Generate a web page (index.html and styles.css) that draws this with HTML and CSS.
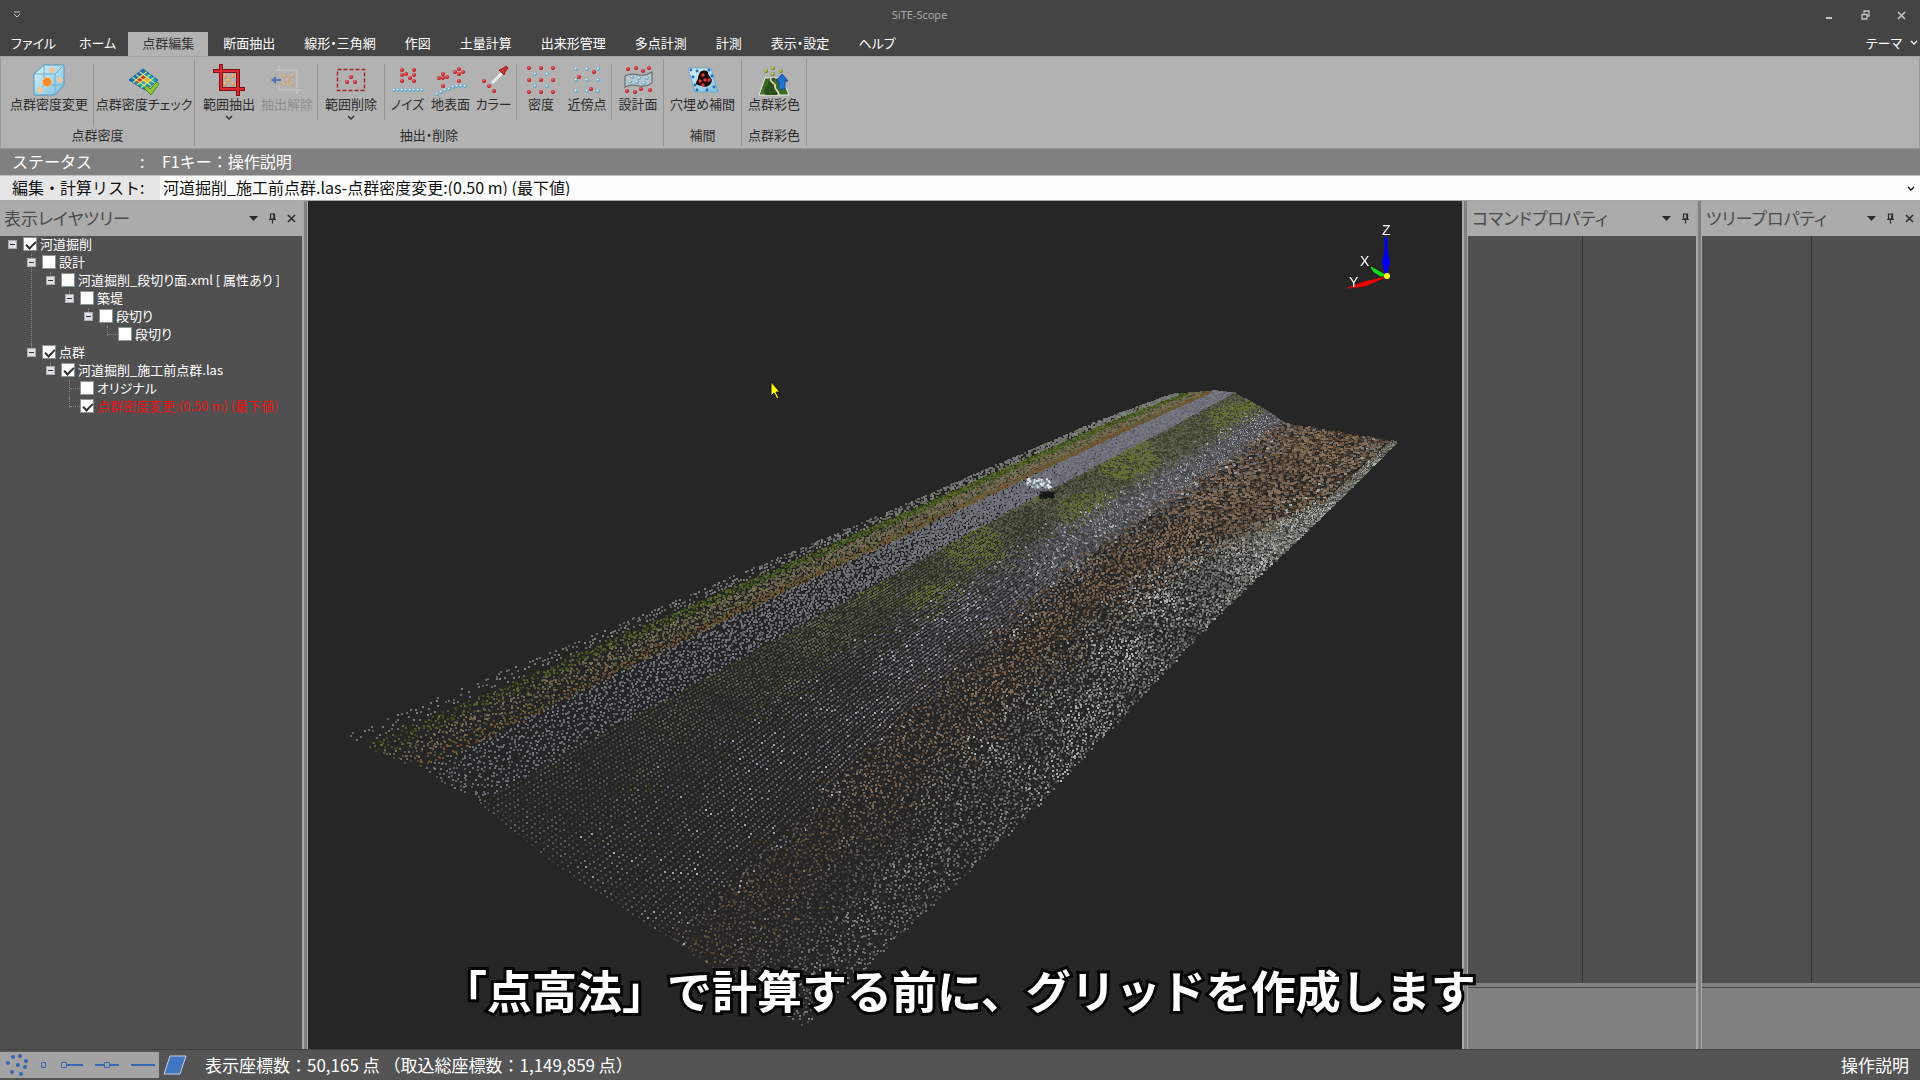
FILE: index.html
```
<!DOCTYPE html>
<html lang="ja">
<head>
    <meta charset="UTF-8">
    <meta name="viewport" content="width=device-width, initial-scale=1.0">
    <title>SiTE-Scope</title>
    <link rel="stylesheet" href="styles.css">
</head>
<body>
    <!-- shared dots and small glyphs -->
    <svg class="defs" aria-hidden="true">
        <defs>
            <radialGradient id="redBall" cx="0.4" cy="0.35"><stop offset="0" stop-color="#f26b6b"/><stop offset="1" stop-color="#b81e24"/></radialGradient>
            <radialGradient id="blueBall" cx="0.4" cy="0.35"><stop offset="0" stop-color="#ffffff"/><stop offset="1" stop-color="#3f9fc8"/></radialGradient>
            <radialGradient id="orangeBall" cx="0.4" cy="0.35"><stop offset="0" stop-color="#ffc890"/><stop offset="1" stop-color="#e58a45"/></radialGradient>
            <radialGradient id="greenBall" cx="0.4" cy="0.35"><stop offset="0" stop-color="#d5e08a"/><stop offset="1" stop-color="#6d8a1e"/></radialGradient>
            <linearGradient id="ice" x1="0" y1="0" x2="1" y2="1"><stop offset="0" stop-color="#dcf2fb"/><stop offset="1" stop-color="#7cc0de"/></linearGradient>
            <circle id="r" r="2.1" fill="url(#redBall)"/>
            <circle id="b" r="1.8" fill="url(#blueBall)"/>
            <circle id="o" r="2.1" fill="url(#orangeBall)"/>
            <circle id="g" r="2.1" fill="url(#greenBall)"/>
            <path id="chevron" d="M1 1l3 3l3-3" fill="none" stroke="currentColor" stroke-width="1.3"/>
            <path id="down" d="M0 3h9l-4.500 5z" fill="currentColor"/>
            <path id="pin" d="M2.500 1h4v5h-4zM5.800 1v5M1 6.500h7M4.500 6.500v4" fill="none" stroke="currentColor" stroke-width="1.200"/>
            <path id="close" d="M1 2l7 7M8 2l-7 7" fill="none" stroke="currentColor" stroke-width="1.600"/>
        </defs>
    </svg>

    <header class="titlebar">
        <button class="quick" aria-label="クイックアクセス"><svg width="8" height="8"><path d="M1 1h6" stroke="currentColor"/><path d="M1 3l3 3l3-3" fill="none" stroke="currentColor"/></svg></button>
        <h1>SiTE-Scope</h1>
        <div class="window-buttons">
            <button aria-label="最小化"><svg width="9" height="10"><path d="M1 8h6" stroke="currentColor" stroke-width="2"/></svg></button>
            <button aria-label="元に戻す"><svg width="9" height="10"><path d="M3 3.500V1h5v5H6M1 4.500h5V9H1z" fill="none" stroke="currentColor" stroke-width="1.300"/></svg></button>
            <button aria-label="閉じる"><svg width="9" height="10"><use href="#close"/></svg></button>
        </div>
    </header>

    <nav class="tabs">
        <button class="kana">ファイル</button>
        <button class="kana">ホーム</button>
        <button class="active">点群編集</button>
        <button>断面抽出</button>
        <button>線形・三角網</button>
        <button>作図</button>
        <button>土量計算</button>
        <button>出来形管理</button>
        <button>多点計測</button>
        <button>計測</button>
        <button>表示・設定</button>
        <button>ヘルプ</button>
        <button class="theme">テーマ <svg width="8" height="6"><use href="#chevron"/></svg></button>
    </nav>

    <section class="ribbon">
        <div class="group">
            <div class="tools">
                <button class="tool wide">
                    <svg class="icon" viewBox="0 0 32 32">
                        <path d="M1 10L11 1h20v20l-9 10H1z" fill="url(#ice)" stroke="#4a98be"/>
                        <path d="M1 10h21v21M22 10l9-9M1 31l10-10V1M11 21h20" fill="none" stroke="#6fb2d2"/>
                        <circle cx="14" cy="18" r="4.500" fill="#f58a28" stroke="#ffc070"/>
                        <circle cx="19" cy="6" r="3" fill="#eec69c"/><circle cx="27" cy="16" r="2.800" fill="#eec69c"/><circle cx="7" cy="26" r="3" fill="#eec69c"/>
                    </svg>
                    <span>点群密度変更</span>
                </button>
                <button class="tool check">
                    <svg class="icon" viewBox="0 0 32 32">
                        <path d="M15 5L30 16L17 26L1 16z" fill="#16a3bd" stroke="#1a5f9c"/>
                        <path d="M15 5L20 9L5 19L1 16z" fill="#176fb4"/>
                        <path d="M15 11l4 3l-4 3l-4-3zM11 14l4 3l-4 3l-4-3z" fill="#d92b1c"/>
                        <path d="M19 14l4 3l-4 3l-4-3z" fill="#f4a52a"/>
                        <path d="M11.500 7.700L26.500 19M8 10.500L23 21.500M4.500 13.200L20 24M18.700 7.700L4.900 18.500M22.500 10.500L9 21M26.200 13.200L13 23.500" fill="none" stroke="#d8e26c" stroke-width="1.100"/>
                        <path d="M16 24l3-2l3 3l7-7l2 2l-8 11z" fill="#8cc63c" stroke="#4d8422"/>
                    </svg>
                    <span>点群密度チェック</span>
                </button>
            </div>
            <h2>点群密度</h2>
        </div>

        <div class="group extract">
            <div class="tools">
                <button class="tool mid">
                    <svg class="icon" viewBox="0 0 32 32">
                        <g fill="none" stroke="#7d0f14" stroke-width="4"><path d="M8 0v25h24M0 7h25v25"/></g>
                        <g fill="none" stroke="#dc2a30" stroke-width="2"><path d="M8 1v24h23M1 7h24v24"/></g>
                        <use href="#o" x="12" y="12"/><use href="#o" x="20" y="12"/><use href="#o" x="16" y="16"/><use href="#o" x="12" y="20"/><use href="#o" x="20" y="20"/>
                    </svg>
                    <span>範囲抽出</span>
                    <svg class="more" width="8" height="6"><use href="#chevron"/></svg>
                </button>
                <button class="tool mid" disabled>
                    <svg class="icon" viewBox="0 0 32 32">
                        <path d="M8 2v4M4 6h22v24M8 21v5h22" fill="none" stroke="#c3c3c3" stroke-width="1.500"/>
                        <path d="M0 16l5-4v3h5v2H5v3z" fill="#5671b4"/>
                        <g opacity="0.65"><use href="#o" x="13" y="12"/><use href="#o" x="21" y="12"/><use href="#o" x="17" y="16"/><use href="#o" x="13" y="20"/><use href="#o" x="21" y="20"/></g>
                    </svg>
                    <span>抽出解除</span>
                </button>
                <i class="rule"></i>
                <button class="tool large">
                    <svg class="icon" viewBox="0 0 32 32">
                        <rect x="2.500" y="5.500" width="27" height="21" fill="none" stroke="#a32429" stroke-width="1.400" stroke-dasharray="4 2"/>
                        <use href="#r" x="16" y="13"/><use href="#r" x="12" y="18"/><use href="#r" x="20" y="18"/>
                    </svg>
                    <span>範囲削除</span>
                    <svg class="more" width="8" height="6"><use href="#chevron"/></svg>
                </button>
                <i class="rule"></i>
                <button class="tool">
                    <svg class="icon" viewBox="0 0 32 32">
                        <use href="#r" x="10" y="6"/><use href="#r" x="22" y="6"/><use href="#r" x="10" y="11"/><use href="#r" x="14" y="10"/><use href="#r" x="22" y="11"/><use href="#r" x="18" y="14"/><use href="#r" x="10" y="17"/><use href="#r" x="22" y="17"/>
                        <use href="#b" x="2" y="26"/><use href="#b" x="6" y="26"/><use href="#b" x="10" y="26"/><use href="#b" x="14" y="26"/><use href="#b" x="18" y="26"/><use href="#b" x="22" y="26"/><use href="#b" x="26" y="26"/><use href="#b" x="30" y="26"/>
                    </svg>
                    <span>ノイズ</span>
                </button>
                <button class="tool">
                    <svg class="icon" viewBox="0 0 32 32">
                        <use href="#r" x="8" y="10"/><use href="#r" x="4" y="14"/><use href="#r" x="8" y="14"/><use href="#r" x="12" y="13"/><use href="#r" x="8" y="22"/><use href="#r" x="24" y="5"/><use href="#r" x="20" y="8"/><use href="#r" x="28" y="8"/><use href="#r" x="24" y="10"/><use href="#r" x="24" y="17"/>
                        <use href="#b" x="2" y="30"/><use href="#b" x="6" y="28"/><use href="#b" x="10" y="26"/><use href="#b" x="14" y="25"/><use href="#b" x="18" y="23"/><use href="#b" x="22" y="22"/><use href="#b" x="26" y="22"/><use href="#b" x="30" y="22"/>
                    </svg>
                    <span>地表面</span>
                </button>
                <button class="tool">
                    <svg class="icon" viewBox="0 0 32 32">
                        <path d="M14 19L25 8" stroke="#ececec" stroke-width="3"/>
                        <path d="M21 6l3-1l4-3l2 2l-3 4l-1 3z" fill="#cf343b" stroke="#94191f"/>
                        <use href="#r" x="6" y="17"/><use href="#r" x="11" y="22"/><use href="#r" x="16" y="27"/>
                    </svg>
                    <span>カラー</span>
                </button>
                <i class="rule"></i>
                <button class="tool near">
                    <svg class="icon" viewBox="0 0 32 32">
                        <use href="#r" x="4" y="4"/><use href="#r" x="16" y="4"/><use href="#r" x="28" y="4"/><use href="#r" x="4" y="16"/><use href="#r" x="16" y="16"/><use href="#r" x="28" y="16"/><use href="#r" x="4" y="28"/><use href="#r" x="16" y="28"/><use href="#r" x="28" y="28"/>
                        <use href="#b" x="10" y="10"/><use href="#b" x="22" y="10"/><use href="#b" x="10" y="22"/><use href="#b" x="22" y="22"/>
                    </svg>
                    <span>密度</span>
                </button>
                <button class="tool near">
                    <svg class="icon" viewBox="0 0 32 32">
                        <use href="#b" x="5" y="5"/><use href="#b" x="16" y="5"/><use href="#b" x="27" y="5"/><use href="#b" x="5" y="16"/><use href="#b" x="16" y="16"/><use href="#b" x="27" y="16"/><use href="#b" x="5" y="27"/><use href="#b" x="16" y="27"/><use href="#b" x="27" y="27"/>
                        <use href="#r" x="23" y="8"/><use href="#r" x="8" y="13"/><use href="#r" x="20" y="25"/>
                    </svg>
                    <span>近傍点</span>
                </button>
                <i class="rule"></i>
                <button class="tool design">
                    <svg class="icon" viewBox="0 0 32 32">
                        <path d="M3 12c10-6 14 4 27-4v11c-12 8-16-2-27 4z" fill="#b8c5cb" stroke="#687176" stroke-width="1.200"/>
                        <use href="#r" x="6" y="5"/><use href="#r" x="14" y="4"/><use href="#r" x="21" y="7"/><use href="#r" x="27" y="4"/><use href="#r" x="5" y="27"/><use href="#r" x="13" y="28"/><use href="#r" x="19" y="25"/><use href="#r" x="28" y="26"/>
                        <use href="#b" x="10" y="13"/><use href="#b" x="17" y="14"/><use href="#b" x="25" y="14"/><use href="#b" x="8" y="18"/><use href="#b" x="15" y="18"/><use href="#b" x="22" y="19"/>
                    </svg>
                    <span>設計面</span>
                </button>
            </div>
            <h2>抽出・削除</h2>
        </div>

        <div class="group">
            <div class="tools">
                <button class="tool fill">
                    <svg class="icon" viewBox="0 0 32 32">
                        <path d="M1 4h23l7 24H8z" fill="url(#ice)" stroke="#6aa9c8"/>
                        <path d="M13 8c5-3 9-1 8 2l4 6c-1 6-6 8-10 6l-5-1c-3-3 2-5 1-8z" fill="#1c0606"/>
                        <g fill="#2767b3"><circle cx="4" cy="6" r="1.400"/><circle cx="10" cy="7" r="1.400"/><circle cx="22" cy="6" r="1.400"/><circle cx="6" cy="13" r="1.400"/><circle cx="25" cy="12" r="1.400"/><circle cx="8" cy="21" r="1.400"/><circle cx="10" cy="26" r="1.400"/><circle cx="20" cy="26" r="1.400"/><circle cx="27" cy="23" r="1.400"/></g>
                        <g fill="#e33d43"><circle cx="16" cy="11" r="1.700"/><circle cx="13" cy="17" r="1.700"/><circle cx="18" cy="16" r="1.700"/><circle cx="22" cy="16" r="1.700"/><circle cx="16" cy="21" r="1.700"/></g>
                    </svg>
                    <span>穴埋め補間</span>
                </button>
            </div>
            <h2>補間</h2>
        </div>

        <div class="group">
            <div class="tools">
                <button class="tool large">
                    <svg class="icon" viewBox="0 0 32 32">
                        <path d="M7 14h17l7 17H1z" fill="#3f6b25" stroke="#e8eee8"/>
                        <path d="M7 31c-2-9 4-8 4-17h6c-4 8 4 9 2 17z" fill="#2a4f1b"/>
                        <path d="M13 14c-3 4 6 5 4 9c0 3 4 4 4 8" fill="none" stroke="#e5dcb4" stroke-width="1.700"/>
                        <path d="M24 10l6 7h-3v8h-6v-8h-3z" fill="#2273cf" stroke="#134c94"/>
                        <use href="#g" x="8" y="7"/><use href="#g" x="15" y="4"/><use href="#g" x="15" y="10"/><use href="#g" x="23" y="7"/>
                    </svg>
                    <span>点群彩色</span>
                </button>
            </div>
            <h2>点群彩色</h2>
        </div>
    </section>

    <div class="status-line">
        <span class="status-name">ステータス</span><span class="colon">:</span><span>F1キー：操作説明</span>
    </div>
    <div class="list-line">
        <label for="editList">編集・計算リスト:</label>
        <select id="editList">
            <option>河道掘削_施工前点群.las-点群密度変更:(0.50 m) (最下値)</option>
        </select>
        <svg class="select-arrow" width="8" height="6"><use href="#chevron"/></svg>
    </div>

    <main>
        <aside class="panel layers">
            <div class="panel-head">
                <h2>表示レイヤツリー</h2>
                <button aria-label="メニュー"><svg width="9" height="11"><use href="#down"/></svg></button>
                <button aria-label="固定"><svg width="9" height="11"><use href="#pin"/></svg></button>
                <button aria-label="閉じる"><svg width="9" height="11"><use href="#close"/></svg></button>
            </div>
            <ul class="tree">
                <li>
                    <div class="node"><button aria-label="折りたたむ"></button><label><input type="checkbox" checked>河道掘削</label></div>
                    <ul>
                        <li>
                            <div class="node"><button aria-label="折りたたむ"></button><label><input type="checkbox">設計</label></div>
                            <ul>
                                <li>
                                    <div class="node"><button aria-label="折りたたむ"></button><label><input type="checkbox">河道掘削_段切り面.xml [ 属性あり ]</label></div>
                                    <ul>
                                        <li>
                                            <div class="node"><button aria-label="折りたたむ"></button><label><input type="checkbox">築堤</label></div>
                                            <ul>
                                                <li>
                                                    <div class="node"><button aria-label="折りたたむ"></button><label><input type="checkbox">段切り</label></div>
                                                    <ul>
                                                        <li><div class="node"><i></i><label><input type="checkbox">段切り</label></div></li>
                                                    </ul>
                                                </li>
                                            </ul>
                                        </li>
                                    </ul>
                                </li>
                            </ul>
                        </li>
                        <li>
                            <div class="node"><button aria-label="折りたたむ"></button><label><input type="checkbox" checked>点群</label></div>
                            <ul>
                                <li>
                                    <div class="node"><button aria-label="折りたたむ"></button><label><input type="checkbox" checked>河道掘削_施工前点群.las</label></div>
                                    <ul>
                                        <li><div class="node"><i></i><label><input type="checkbox">オリジナル</label></div></li>
                                        <li><div class="node current"><i></i><label><input type="checkbox" checked>点群密度変更:(0.50 m) (最下値)</label></div></li>
                                    </ul>
                                </li>
                            </ul>
                        </li>
                    </ul>
                </li>
            </ul>
        </aside>

        <div class="splitter"></div>

        <section class="view">
            <canvas id="cloud"></canvas>
            <svg class="axes" width="60" height="70" viewBox="0 0 60 70">
                <path d="M44 17v40" stroke="#0000f0" stroke-width="3"/><path d="M44 24l4 18l-2 9h-4l-2-9z" fill="#0000f0"/>
                <path d="M45 56L29 47l3 5l7 4z" fill="#12e012" stroke="#12e012"/>
                <path d="M44 57L22 62L6 68l17-2l9-4z" fill="#f00000" stroke="#f00000"/>
                <circle cx="45" cy="56" r="3" fill="#ffff20"/>
                <text x="40" y="15">Z</text><text x="18" y="46">X</text><text x="7" y="67">Y</text>
            </svg>
            <svg class="cursor" width="12" height="20" viewBox="0 0 12 20"><path d="M1 1v14l3-3l3 6l2-1l-3-6h4z" fill="#ffff00" stroke="#111111"/></svg>
            <p class="caption">「点高法」で計算する前に、グリッドを作成します</p>
        </section>

        <div class="splitter"></div>

        <aside class="panel command">
            <div class="panel-head">
                <h2>コマンドプロパティ</h2>
                <button aria-label="メニュー"><svg width="9" height="11"><use href="#down"/></svg></button>
                <button aria-label="固定"><svg width="9" height="11"><use href="#pin"/></svg></button>
            </div>
            <div class="props"><div></div><div></div></div>
            <div class="hint"></div>
        </aside>

        <div class="splitter"></div>

        <aside class="panel tree-props">
            <div class="panel-head">
                <h2>ツリープロパティ</h2>
                <button aria-label="メニュー"><svg width="9" height="11"><use href="#down"/></svg></button>
                <button aria-label="固定"><svg width="9" height="11"><use href="#pin"/></svg></button>
                <button aria-label="閉じる"><svg width="9" height="11"><use href="#close"/></svg></button>
            </div>
            <div class="props"><div></div><div></div></div>
            <div class="hint"></div>
        </aside>
    </main>

    <footer>
        <div class="snap">
            <button aria-label="点群"><svg width="24" height="26" viewBox="0 0 24 26" fill="#3569b1"><circle cx="9" cy="5" r="2"/><circle cx="16" cy="4" r="2"/><circle cx="4" cy="11" r="2"/><circle cx="22" cy="9" r="2"/><circle cx="14" cy="13" r="2"/><circle cx="21" cy="15" r="2"/><circle cx="8" cy="20" r="2"/><circle cx="17" cy="22" r="2"/></svg></button>
            <button aria-label="点"><svg width="8" height="8"><path d="M1.500 1.500h4v5h-4z" fill="none" stroke="#3569b1"/></svg></button>
            <button aria-label="端点"><svg width="24" height="8"><path d="M1.500 1.500h5v5h-5z" fill="none" stroke="#3569b1"/><path d="M7 4h16" stroke="#3569b1" stroke-width="2"/></svg></button>
            <button aria-label="中点"><svg width="24" height="8"><path d="M0 4h9M15 4h9" stroke="#3569b1" stroke-width="2"/><path d="M9.500 1.500h5v5h-5z" fill="none" stroke="#3569b1"/></svg></button>
            <button aria-label="線"><svg width="24" height="8"><path d="M0 4h24" stroke="#3569b1" stroke-width="2"/></svg></button>
        </div>
        <button aria-label="面"><svg width="24" height="20"><path d="M7 1h16l-6 18H1z" fill="#4275c2" stroke="#c6d2e6"/></svg></button>
        <p>表示座標数：50,165 点 （取込総座標数：1,149,859 点）</p>
        <a href="#">操作説明</a>
    </footer>

    <script src="cloud.js"></script>
</body>
</html>
```

FILE: styles.css
```
* {
    box-sizing: border-box;
}

body {
    margin: 0;
    height: 100vh;
    display: flex;
    flex-direction: column;
    overflow: hidden;
    background-color: #444444;
    color: #ffffff;
    font-family: "Noto Sans CJK JP", "Noto Sans", sans-serif;
    font-size: 13px;
    line-height: 18px;
}

h1, h2, p, ul {
    margin: 0;
    padding: 0;
    font-weight: normal;
}

button {
    padding: 0;
    border: none;
    background: none;
    color: inherit;
    font: inherit;
    white-space: nowrap;
}

svg {
    display: block;
}

.defs {
    position: absolute;
    width: 0;
    height: 0;
}

/* proportional kana */
.tabs button, .tool, .group h2, .panel-head h2, .tree {
    font-feature-settings: "palt";
}

/* title and tabs */
.titlebar {
    display: grid;
    grid-template-columns: 11fr auto 12fr;
    align-items: center;
    height: 30px;
    padding: 0 14px 0 13px;
    color: #c4c4c4;
}

.titlebar h1 {
    font-family: "Noto Sans", sans-serif;
    font-size: 11px;
    color: #a8a8a8;
}

.quick {
    justify-self: start;
}

.window-buttons {
    display: flex;
    justify-content: flex-end;
    gap: 27px;
}

.tabs {
    display: flex;
    height: 26px;
    padding-top: 2px;
}

.tabs button {
    padding: 0 14px 2px;
    margin-right: 1px;
}

.tabs .kana {
    padding: 0 11px 2px;
}

.tabs .active {
    background-color: #b2b2b2;
    color: #333333;
}

.tabs .theme {
    display: flex;
    align-items: center;
    gap: 8px;
    margin: 0 0 0 auto;
    padding: 0 2px 2px;
}

/* ribbon */
.ribbon {
    display: flex;
    height: 93px;
    background-color: #b2b2b2;
    border: 1px solid #999999;
    border-top-color: #a0a0a0;
    color: #2c2c2c;
}

.group {
    display: flex;
    flex-direction: column;
    margin: 2px 0;
    border-right: 1px solid #969696;
}

.tools {
    display: flex;
    height: 68px;
    padding-top: 5px;
}

.extract .tools {
    padding-left: 5px;
}

.group h2 {
    font-size: 13px;
    line-height: 16px;
    text-align: center;
}

.tool {
    display: flex;
    flex-direction: column;
    align-items: center;
    width: 43px;
    line-height: 16px;
}

.tool:disabled {
    color: #8f8f8f;
}

.tool.wide {
    width: 93px;
    padding-left: 4px;
    border-right: 1px solid #969696;
}

.tool.check {
    width: 100px;
}

.tool.mid {
    width: 58px;
}

.tool.large {
    width: 64px;
}

.tool.near {
    width: 46px;
}

.tool.design {
    width: 50px;
}

.tool.fill {
    width: 77px;
}

.icon {
    width: 32px;
    height: 32px;
}

.more {
    margin-top: 3px;
}

.rule {
    width: 1px;
    height: 56px;
    margin: 0 1px;
    background-color: #969696;
}

/* status and list lines */
.status-line, .list-line {
    display: flex;
    align-items: center;
    height: 26px;
    font-size: 16px;
}

.status-line {
    padding: 0 12px 2px;
    background-color: #808080;
}

.status-name {
    width: 128px;
}

.colon {
    width: 22px;
}

.list-line {
    position: relative;
    background-color: #e6e6e6;
    border-top: 1px solid #c0c0c0;
    border-bottom: 1px solid #a8a8a8;
    color: #111111;
}

.list-line label {
    width: 160px;
    padding: 0 0 2px 12px;
    white-space: nowrap;
}

.list-line select {
    flex: 1;
    height: 24px;
    padding: 0 3px 2px;
    appearance: none;
    border: none;
    border-radius: 0;
    background-color: #fdfdfd;
    color: #111111;
    font: inherit;
}

.select-arrow {
    position: absolute;
    right: 5px;
    top: 10px;
}

/* main area */
main {
    flex: 1;
    min-height: 0;
    display: flex;
}

.panel {
    display: flex;
    flex-direction: column;
    background-color: #505050;
}

.layers {
    width: 302px;
}

.command {
    width: 228px;
}

.tree-props {
    width: 218px;
}

.panel-head {
    display: flex;
    align-items: center;
    gap: 10px;
    height: 35px;
    padding: 0 6px 0 4px;
    background-color: #ababab;
    color: #2c2c2c;
}

.panel-head h2 {
    flex: 1;
    padding-bottom: 2px;
    font-size: 17px;
    color: #4c4c4c;
    white-space: nowrap;
}

.splitter {
    width: 6px;
    background-color: #808080;
    border: 2px solid #a8a8a8;
    border-width: 0 1px 0 2px;
}

.props {
    flex: 1;
    display: grid;
    grid-template-columns: 1fr 1fr;
}

.props div + div {
    border-left: 1px solid #333333;
}

.hint {
    height: 66px;
    border-top: 4px solid #808080;
    background-color: #808080;
    box-shadow: inset 0 1px #4a4a4a;
}

/* layer tree */
.tree, .tree ul {
    list-style: none;
}

.tree ul {
    padding-left: 19px;
}

.tree li {
    position: relative;
}

.tree ul > li::before {
    content: "";
    position: absolute;
    left: 12px;
    top: 0;
    height: 100%;
    border-left: 1px dotted #858585;
}

.tree ul > li:last-child::before {
    height: 10px;
}

.node {
    display: flex;
    align-items: center;
    height: 18px;
    padding: 0 0 2px 8px;
    white-space: nowrap;
}

.node button {
    position: relative;
    width: 9px;
    height: 9px;
    margin-right: 6px;
    background: linear-gradient(#333333, #333333) center / 5px 1px no-repeat, #dedee6;
    border: 1px solid #aaaaaa;
}

.node i {
    width: 10px;
    height: 1px;
    margin: 0 0 0 5px;
    border-top: 1px dotted #858585;
}

.node label {
    display: flex;
    align-items: center;
    gap: 3px;
}

.node input {
    appearance: none;
    width: 14px;
    height: 14px;
    margin: 0;
    background-color: #ffffff;
    border: 1px solid #8b9692;
}

.node input:checked::after {
    content: "";
    display: block;
    width: 8px;
    height: 4px;
    margin: 3px 2px;
    border: solid #333333;
    border-width: 0 0 2px 2px;
    transform: rotate(-45deg);
}

.current {
    color: #e81414;
}

/* 3D view */
.view {
    position: relative;
    flex: 1;
    min-width: 0;
    background-color: #262626;
}

.view canvas {
    display: block;
    position: absolute;
    width: 100%;
    height: 100%;
}

.axes {
    position: absolute;
    right: 60px;
    top: 19px;
    fill: #ffffff;
    font: 14px "Liberation Sans", sans-serif;
}

.cursor {
    position: absolute;
    left: 40%;
    top: 180px;
}

.caption {
    position: absolute;
    z-index: 1;
    left: 134px;
    bottom: 29px;
    font-size: 45px;
    font-weight: bold;
    line-height: 60px;
    white-space: nowrap;
    -webkit-text-stroke: 6px #050505;
    paint-order: stroke fill;
}

/* bottom bar */
footer {
    display: flex;
    align-items: center;
    height: 31px;
    background-color: #545454;
    border-top: 1px solid #404040;
    font-size: 17px;
}

.snap {
    display: flex;
    align-items: center;
    justify-content: space-between;
    width: 159px;
    height: 26px;
    padding: 0 4px;
    margin-right: 4px;
    background-color: #a3a3a3;
}

footer p {
    margin-left: 18px;
}

footer a {
    margin-left: auto;
    padding-right: 11px;
    color: inherit;
    text-decoration: none;
}
```

FILE: cloud.js
```
// Draws the river bank as a grid of points seen in perspective.
const canvas = document.getElementById('cloud');
const ctx = canvas.getContext('2d');

const baseWidth = 1154;
const baseHeight = 848;
const rows = 540;

// Lines running along the bank, each with points at STEPS (near -> far).
const STEPS = [0, 0.4, 0.7, 0.9, 1];
const lines = [
    [[41, 534], [371, 398], [618, 294], [783, 222], [865, 192]],
    [[60, 544], [385, 403], [628, 297], [790, 225], [872, 192]],
    [[118, 567], [430, 413], [670, 299], [826, 225], [905, 189]],
    [[172, 601], [475, 434], [700, 310], [850, 232], [925, 191]],
    [[244, 660], [540, 452], [746, 327], [890, 246], [952, 206]],
    [[362, 736], [600, 512], [791, 348], [914, 264], [975, 221]],
    [[410, 768], [655, 545], [838, 372], [1018, 298], [1083, 239]],
    [[498, 825], [734, 602], [905, 421], [1028, 299], [1087, 240]]
];

// Surfaces between two lines: number of columns, colours, roughness and density.
const bands = [
    { cols: 3, colors: ['#7f817e', '#6b6d66'], rough: 0.4, density: 0.55 },
    { cols: 18, colors: ['#6f6a50', '#7d745a', '#686049', '#4c4b35'], rough: 1, density: 0.8 },
    { cols: 13, colors: ['#70707a', '#7a7a84', '#65656e'], rough: 0.8, density: 0.95 },
    { cols: 17, colors: ['#44462f', '#51543a', '#5c5d4e', '#383a2e', '#666856'], rough: 0.15, density: 1 },
    { cols: 22, colors: ['#62626a', '#4d4d50', '#7d7d86', '#424240', '#56565c'], rough: 0.15, density: 1 },
    { cols: 18, colors: ['#806a55', '#6b5743', '#8e7864', '#4c4032', '#35302a'], rough: 1, density: 0.9 },
    { cols: 28, colors: ['#7c7e79', '#62645f', '#8d8f8a', '#53524a', '#33342f'], rough: 1, density: 0.85 }
];

let seed = 7;
function random() {
    seed = (seed * 16807) % 2147483647;
    return seed / 2147483647;
}

function pick(colors) {
    return colors[Math.floor(random() * colors.length)];
}

// slow waves over the ground, -1 to 1, for darker and lighter patches
function patch(x, y) {
    return (Math.sin(x * 0.061 + y * 0.033) + Math.sin(y * 0.093 - x * 0.027)) / 2;
}

function pointOn(line, s) {
    let i = 0;
    while (i < STEPS.length - 2 && s > STEPS[i + 1]) i++;
    const t = (s - STEPS[i]) / (STEPS[i + 1] - STEPS[i]);
    return [
        line[i][0] + (line[i + 1][0] - line[i][0]) * t,
        line[i][1] + (line[i + 1][1] - line[i][1]) * t
    ];
}

function pointColor(b, t, s, wave) {
    // grass edges and the rusty verge beside the road
    if (b === 1 && t < 0.25) return pick(['#4a5c1c', '#3c4a1c', '#5f6c3a']);
    if (b === 1 && t > 0.72) return pick(['#7c4a2c', '#6d6436', '#5b5c34', '#6b5a3c']);
    // surfaces run into each other below the road
    if (b > 3 && random() < 0.5 - t * 1.5) b = b - 1;
    else if (b > 2 && b < 6 && random() < (t - 0.7) * 1.2) b = b + 1;
    // bright patches
    if (b === 4 && random() < 0.05) return '#b9bac2';
    if (b === 3 && s > 0.5 && wave > 0.1 && random() < 0.4) return '#66722c';
    if (b === 6 && s > 0.4 && random() < 0.1 + wave * 0.1) return '#b9bbb8';
    // brown soil thins out into dark ground near the viewer
    if (b === 5 && s < 0.25) return pick(['#5c4c36', '#3e362a', '#4e4638', '#6d6049']);
    if (b === 6 && s < 0.3 && t < 0.4) return pick(['#4c4a42', '#5e584a', '#6c6c68', '#3a3934']);
    return pick(bands[b].colors);
}

function drawCloud() {
    seed = 7;
    canvas.width = canvas.clientWidth;
    canvas.height = canvas.clientHeight;
    const scale = Math.min(canvas.width / baseWidth, canvas.height / baseHeight);
    ctx.scale(scale, scale);

    for (let row = 0; row < rows; row++) {
        const depth = row / rows;
        const s = 3 * depth / (1 + 2 * depth);
        bands.forEach(function (band, b) {
            const from = pointOn(lines[b], s);
            const to = pointOn(lines[b + 1], s);
            const spread = band.rough * 4 * (1.1 - s);
            for (let col = 0; col < band.cols; col++) {
                if (random() > band.density) continue;
                const t = (col + (random() - 0.5) * band.rough) / band.cols;
                const x = from[0] + (to[0] - from[0]) * t + (random() - 0.5) * spread;
                const y = from[1] + (to[1] - from[1]) * t + (random() - 0.5) * spread;
                const wave = patch(x, y);
                const size = b > 2 && s > 0.8 ? 3 : 2;
                ctx.globalAlpha = b > 2 ? 0.75 + wave * 0.15 + random() * 0.1 : 0.75 + random() * 0.25;
                ctx.fillStyle = pointColor(b, t, s, wave);
                ctx.fillRect(Math.round(x), Math.round(y), size, 2);
            }
        });
    }

    // parked car on the road
    ctx.globalAlpha = 1;
    for (let i = 0; i < 60; i++) {
        ctx.fillStyle = random() < 0.6 ? '#dce8ec' : '#8d9ba0';
        ctx.fillRect(718 + random() * 24, 277 + random() * 9, 2, 2);
        ctx.fillStyle = '#15191a';
        ctx.fillRect(731 + random() * 14, 290 + random() * 6, 2, 2);
    }
}

drawCloud();
window.addEventListener('resize', drawCloud);
```
